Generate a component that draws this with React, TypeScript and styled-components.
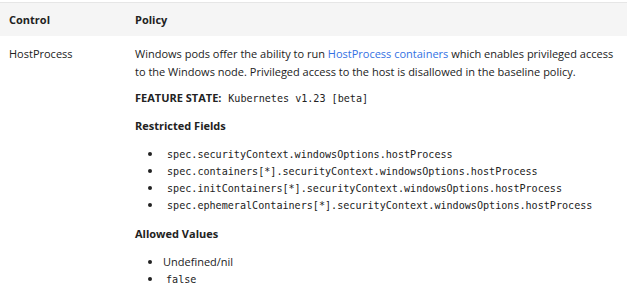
import styled, { createGlobalStyle } from "styled-components";

const GlobalStyle = createGlobalStyle`
  body {
    margin: 0;
    background: #fff;
    font-family: "Open Sans", "Noto Sans", sans-serif;
    color: #222;
  }
`;

const Table = styled.table`
  width: 100%;
  border-collapse: collapse;
  margin-top: 2px;
  font-size: 11px;
  line-height: 18px;
`;

const HeadRow = styled.tr`
  background: #f5f5f5;
  border-top: 1px solid #e6e6e6;
`;

const Th = styled.th<{ $w?: number }>`
  text-align: left;
  font-weight: 700;
  padding: 8px 6px 7px 9px;
  vertical-align: middle;
  ${(p) => (p.$w ? `width: ${p.$w}px;` : "")}
`;

const Td = styled.td<{ $w?: number }>`
  padding: 9px 6px 9px 9px;
  vertical-align: top;
  ${(p) => (p.$w ? `width: ${p.$w}px;` : "")}
`;

const P = styled.p<{ $mb?: number }>`
  margin: 0 0 ${(p) => p.$mb ?? 10}px;
`;

const Link = styled.a`
  color: #3371e3;
  text-decoration: none;
`;

const Strong = styled.strong`
  font-weight: 700;
`;

const Code = styled.code<{ $pad?: boolean; $gap?: boolean }>`
  font-family: "DejaVu Sans Mono", "Liberation Mono", monospace;
  font-size: 10.1px;
  line-height: 1;
  color: #222;
  ${(p) => (p.$pad ? "padding: 0 0.3em;" : "")}
  ${(p) => (p.$gap ? "margin-left: 4px;" : "")}
`;

const List = styled.ul`
  margin: 0 0 12px;
  padding-left: 28px;
  line-height: 17px;
`;

const Item = styled.li<{ $mono?: boolean }>`
  ${(p) => (p.$mono ? "padding-left: 4px;" : "")}
`;

const fields = [
  "spec.securityContext.windowsOptions.hostProcess",
  "spec.containers[*].securityContext.windowsOptions.hostProcess",
  "spec.initContainers[*].securityContext.windowsOptions.hostProcess",
  "spec.ephemeralContainers[*].securityContext.windowsOptions.hostProcess",
];

export default function App() {
  return (
    <>
      <GlobalStyle />
      <Table>
        <thead>
          <HeadRow>
            <Th $w={111}>Control</Th>
            <Th>Policy</Th>
          </HeadRow>
        </thead>
        <tbody>
          <tr>
            <Td $w={111}>HostProcess</Td>
            <Td>
              <P $mb={8}>
                Windows pods offer the ability to run{" "}
                <Link href="#">HostProcess containers</Link> which enables
                privileged access to the Windows node. Privileged access to the
                host is disallowed in the baseline policy.
              </P>
              <P>
                <Strong>FEATURE STATE:</Strong>{" "}
                <Code $gap>Kubernetes v1.23 [beta]</Code>
              </P>
              <P>
                <Strong>Restricted Fields</Strong>
              </P>
              <List>
                {fields.map((f) => (
                  <Item key={f} $mono>
                    <Code>{f}</Code>
                  </Item>
                ))}
              </List>
              <P>
                <Strong>Allowed Values</Strong>
              </P>
              <List>
                <Item>Undefined/nil</Item>
                <Item>
                  <Code $pad>false</Code>
                </Item>
              </List>
            </Td>
          </tr>
        </tbody>
      </Table>
    </>
  );
}
